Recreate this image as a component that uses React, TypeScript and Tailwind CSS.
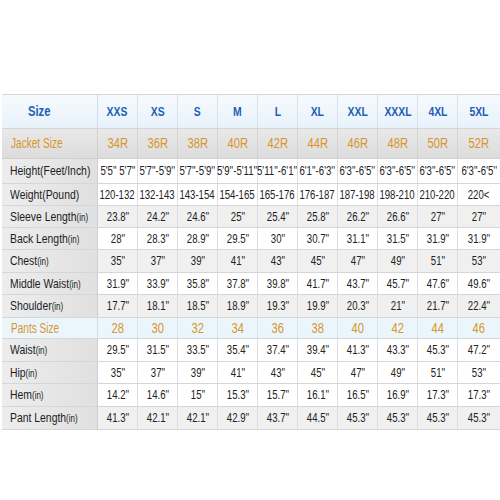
const sizes = ["XXS", "XS", "S", "M", "L", "XL", "XXL", "XXXL", "4XL", "5XL"];

type Row = {
  label: string;
  unit?: string;
  values: string[];
  h: string;
  shade?: boolean;
};

const rows: Row[] = [
  {
    label: "Height(Feet/Inch)",
    values: ["5'5'' 5'7''", "5'7''-5'9''", "5'7''-5'9''", "5'9''-5'11''", "5'11''-6'1''", "6'1''-6'3''", "6'3''-6'5''", "6'3''-6'5''", "6'3''-6'5''", "6'3''-6'5''"],
    h: "h-[25px]",
  },
  {
    label: "Weight(Pound)",
    values: ["120-132", "132-143", "143-154", "154-165", "165-176", "176-187", "187-198", "198-210", "210-220", "220<"],
    h: "h-[22px]",
  },
  { label: "Sleeve Length", unit: "(in)", values: ["23.8''", "24.2''", "24.6''", "25''", "25.4''", "25.8''", "26.2''", "26.6''", "27''", "27''"], h: "h-[22px]", shade: true },
  { label: "Back Length", unit: "(in)", values: ["28''", "28.3''", "28.9''", "29.5''", "30''", "30.7''", "31.1''", "31.5''", "31.9''", "31.9''"], h: "h-[22px]" },
  { label: "Chest", unit: "(in)", values: ["35''", "37''", "39''", "41''", "43''", "45''", "47''", "49''", "51''", "53''"], h: "h-[23px]", shade: true },
  { label: "Middle Waist", unit: "(in)", values: ["31.9''", "33.9''", "35.8''", "37.8''", "39.8''", "41.7''", "43.7''", "45.7''", "47.6''", "49.6''"], h: "h-[22px]" },
  { label: "Shoulder", unit: "(in)", values: ["17.7''", "18.1''", "18.5''", "18.9''", "19.3''", "19.9''", "20.3''", "21''", "21.7''", "22.4''"], h: "h-[23px]", shade: true },
];

const pantRows: Row[] = [
  { label: "Waist", unit: "(in)", values: ["29.5''", "31.5''", "33.5''", "35.4''", "37.4''", "39.4''", "41.3''", "43.3''", "45.3''", "47.2''"], h: "h-[23px]" },
  { label: "Hip", unit: "(in)", values: ["35''", "37''", "39''", "41''", "43''", "45''", "47''", "49''", "51''", "53''"], h: "h-[22px]" },
  { label: "Hem", unit: "(in)", values: ["14.2''", "14.6''", "15''", "15.3''", "15.7''", "16.1''", "16.5''", "16.9''", "17.3''", "17.3''"], h: "h-[23px]" },
  { label: "Pant Length", unit: "(in)", values: ["41.3''", "42.1''", "42.1''", "42.9''", "43.7''", "44.5''", "45.3''", "45.3''", "45.3''", "45.3''"], h: "h-[23px]", shade: true },
];

// the chart's lettering is narrow, so squeeze each text sideways
function Label({ children, narrow }: { children: React.ReactNode; narrow?: boolean }) {
  return (
    <span className={`inline-block whitespace-nowrap origin-left ${narrow ? "scale-x-[0.72]" : "scale-x-[0.8]"}`}>
      {children}
    </span>
  );
}

function Val({ children }: { children: React.ReactNode }) {
  return <span className="inline-block whitespace-nowrap scale-x-[0.8]">{children}</span>;
}

const cell = "w-[40px] last:w-[42px] shrink-0 flex items-center justify-center border-r last:border-r-0";
const gold = "text-[#d8952a] text-[14px]";

function DataRow({ row }: { row: Row }) {
  return (
    <div className={`flex ${row.h} border-b border-[#d6d6d6]`}>
      <div className="w-[96px] shrink-0 flex items-center pl-[8px] bg-gradient-to-r from-[#ededed] to-[#e0e0e0] border-r border-[#cfcfcf] text-[#1c1c1c] text-[13px]">
        <Label>
          {row.label}
          {row.unit && <span className="text-[10px]">{row.unit}</span>}
        </Label>
      </div>
      {row.values.map((v, i) => (
        <div key={i} className={`${cell} border-[#dedede] text-[#222] text-[12px] ${row.shade ? "bg-[#f0f0f0]" : "bg-white"}`}>
          <Val>{v}</Val>
        </div>
      ))}
    </div>
  );
}

export default function App() {
  return (
    <div className="w-[500px] h-[500px] overflow-hidden bg-white pt-[94px] pl-[2px] font-['Liberation_Sans',Arial,sans-serif]">
      <div className="border-t border-[#d6d6d6]">
        {/* Size header */}
        <div className="flex h-[34px] border-b border-[#d6d6d6] bg-gradient-to-b from-[#f6fafe] to-[#e8f2fb]">
          <div className="w-[96px] shrink-0 flex items-center pl-[26px] border-r border-[#d2dce6] text-[#1d5fb5] font-bold text-[14px]">
            <Label>Size</Label>
          </div>
          {sizes.map((s) => (
            <div key={s} className={`${cell} border-[#d8e2ec] text-[#1d5fb5] font-bold text-[13px]`}>
              <Val>{s}</Val>
            </div>
          ))}
        </div>

        {/* Jacket size */}
        <div className="flex h-[30px] border-b border-[#d0d0d0] bg-gradient-to-b from-[#e9e9e9] to-[#dcdcdc]">
          <div className={`w-[96px] shrink-0 flex items-center pl-[9px] border-r border-[#cfcfcf] ${gold}`}>
            <Label narrow>Jacket Size</Label>
          </div>
          {["34R", "36R", "38R", "40R", "42R", "44R", "46R", "48R", "50R", "52R"].map((s) => (
            <div key={s} className={`${cell} border-[#d4d4d4] ${gold}`}>
              <Val>{s}</Val>
            </div>
          ))}
        </div>

        {rows.map((r) => (
          <DataRow key={r.label} row={r} />
        ))}

        {/* Pants size */}
        <div className="flex h-[21px] border-b border-[#d6d6d6] bg-[#ebf5fc]">
          <div className={`w-[96px] shrink-0 flex items-center pl-[9px] border-r border-[#d2dce6] ${gold}`}>
            <Label narrow>Pants Size</Label>
          </div>
          {["28", "30", "32", "34", "36", "38", "40", "42", "44", "46"].map((s) => (
            <div key={s} className={`${cell} border-[#dbe5ee] ${gold}`}>
              <Val>{s}</Val>
            </div>
          ))}
        </div>

        {pantRows.map((r) => (
          <DataRow key={r.label} row={r} />
        ))}
      </div>
    </div>
  );
}
